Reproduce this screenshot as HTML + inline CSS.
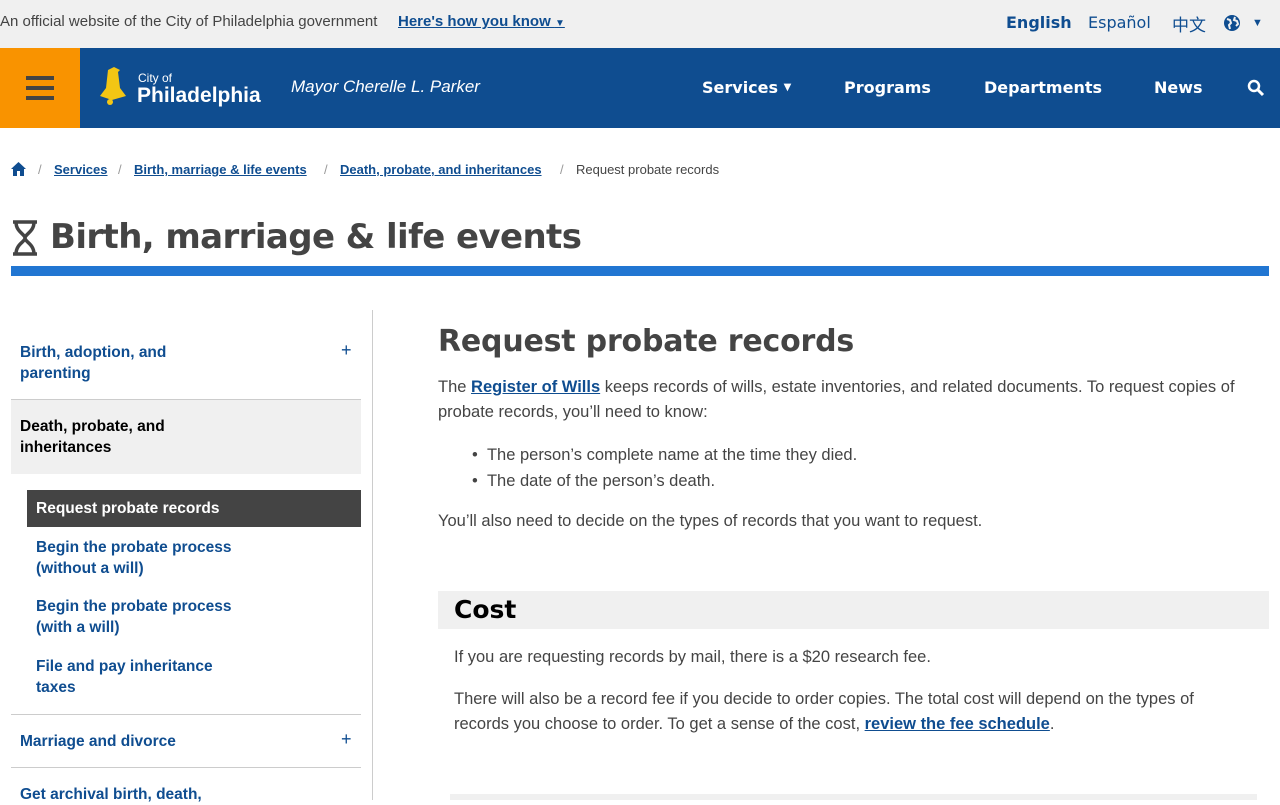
<!DOCTYPE html>
<html><head><meta charset="utf-8"><style>
*{margin:0;padding:0;box-sizing:border-box}
body{width:1280px;height:800px;overflow:hidden;background:#fff;font-family:"Liberation Sans","Noto Sans CJK SC",sans-serif;color:#444;position:relative}
.a{position:absolute;white-space:nowrap}
.top{position:absolute;left:0;top:0;width:1280px;height:48px;background:#f0f0f0}
.nav{position:absolute;left:0;top:48px;width:1280px;height:80px;background:#0f4d90}
.ham{position:absolute;left:0;top:48px;width:80px;height:80px;background:#f99300}
.ham i{position:absolute;left:26px;width:28px;height:4px;background:#444}
.navl{color:#fff;font-family:"DejaVu Sans",sans-serif;font-weight:bold;font-size:16px;top:78px}
a,.lk{color:#0f4d90}
.bc{font-size:13px;top:162px;font-weight:bold;text-decoration:underline;color:#0f4d90}
.sl{color:#999;font-size:13px;top:162px}
.side{font-size:15.5px;color:#0f4d90;line-height:21px;font-weight:bold}
.hr{position:absolute;height:1px;background:#ccc}
p.t{position:absolute;font-size:16.5px;line-height:25px;color:#444}
</style></head><body>
<div class="top"></div>
<div class="a" style="left:0;top:13px;font-size:15px;color:#444">An official website of the City of Philadelphia government</div>
<div class="a" style="left:398px;top:13px;font-size:15px;font-weight:bold;color:#0f4d90;text-decoration:underline">Here's how you know <span style="font-size:10px;text-decoration:none">▼</span></div>
<div class="a" style="left:1006px;top:13px;font-size:16px;font-weight:bold;color:#0f4d90;font-family:'DejaVu Sans',sans-serif">English</div>
<div class="a" style="left:1088px;top:13px;font-size:16px;color:#0f4d90;font-family:'DejaVu Sans',sans-serif">Español</div>
<div class="a" style="left:1172px;top:11px;font-size:17px;color:#0f4d90;font-family:'Noto Sans CJK SC',sans-serif">中文</div>
<svg class="a" style="left:1223px;top:14px" width="18" height="18" viewBox="0 0 18 18"><circle cx="9" cy="9" r="8" fill="#0f4d90"/><path d="M4 5l3 1 1 3-2 2 1 4M12 3l-1 3 3 1 1 3-2 2" stroke="#f0f0f0" stroke-width="2" fill="none"/></svg>
<div class="a" style="left:1252px;top:17px;font-size:11px;color:#0f4d90">▼</div>

<div class="nav"></div>
<div class="ham"><i style="top:28px"></i><i style="top:38px"></i><i style="top:48px"></i></div>
<svg class="a" style="left:98px;top:66px" width="36" height="42" viewBox="0 0 36 42"><path d="M10 4l6-3 6 3-2 2 2 16 6 8-14 4-12-4 6-8z" fill="#f3c614"/><circle cx="12" cy="36" r="3" fill="#f3c614"/></svg>
<div class="a" style="left:138px;top:71px;color:#fff;font-size:12px">City of</div>
<div class="a" style="left:137px;top:84px;color:#fff;font-size:21px;font-weight:bold">Philadelphia</div>
<div class="a" style="left:291px;top:77px;color:#fff;font-size:17px;font-style:italic">Mayor Cherelle L. Parker</div>
<div class="a navl" style="left:702px">Services <span style="font-size:10px;vertical-align:3px">▼</span></div>
<div class="a navl" style="left:844px">Programs</div>
<div class="a navl" style="left:984px">Departments</div>
<div class="a navl" style="left:1154px">News</div>
<svg class="a" style="left:1247px;top:79px" width="18" height="18" viewBox="0 0 18 18"><circle cx="7" cy="7" r="5" stroke="#fff" stroke-width="2.5" fill="none"/><path d="M11 11l5 5" stroke="#fff" stroke-width="3"/></svg>

<svg class="a" style="left:11px;top:162px" width="15" height="14" viewBox="0 0 15 14"><path d="M7.5 0L0 7h2v7h4V9h3v5h4V7h2z" fill="#0f4d90"/></svg>
<div class="a sl" style="left:38px">/</div>
<div class="a bc" style="left:54px">Services</div>
<div class="a sl" style="left:118px">/</div>
<div class="a bc" style="left:134px">Birth, marriage &amp; life events</div>
<div class="a sl" style="left:324px">/</div>
<div class="a bc" style="left:340px">Death, probate, and inheritances</div>
<div class="a sl" style="left:560px">/</div>
<div class="a" style="left:576px;top:162px;font-size:13px;color:#444">Request probate records</div>

<svg class="a" style="left:11px;top:220px" width="28" height="36" viewBox="0 0 28 36"><path d="M2 2h24M2 34h24M5 2c0 10 9 12 9 16s-9 6-9 16M23 2c0 10-9 12-9 16s9 6 9 16" stroke="#444" stroke-width="3.5" fill="none"/></svg>
<div class="a" style="left:50px;top:217px;font-size:34px;font-weight:bold;font-family:'DejaVu Sans',sans-serif;color:#444;letter-spacing:-0.6px">Birth, marriage &amp; life events</div>
<div class="a" style="left:11px;top:266px;width:1258px;height:10px;background:#2176d2"></div>

<div class="a" style="left:372px;top:310px;width:1px;height:490px;background:#ccc"></div>
<div class="a side" style="left:20px;top:342px">Birth, adoption, and<br>parenting</div>
<div class="a" style="left:341px;top:340px;font-size:18px;color:#0f4d90">+</div>
<div class="a" style="left:11px;top:399px;width:350px;height:75px;background:#f0f0f0;border-top:1px solid #ccc"></div>
<div class="a side" style="left:20px;top:416px;color:#000">Death, probate, and<br>inheritances</div>
<div class="a" style="left:27px;top:490px;width:334px;height:37px;background:#444"></div>
<div class="a side" style="left:36px;top:498px;color:#fff;font-weight:bold">Request probate records</div>
<div class="a side" style="left:36px;top:537px">Begin the probate process<br>(without a will)</div>
<div class="a side" style="left:36px;top:596px">Begin the probate process<br>(with a will)</div>
<div class="a side" style="left:36px;top:656px">File and pay inheritance<br>taxes</div>
<div class="hr" style="left:11px;top:714px;width:350px"></div>
<div class="a side" style="left:20px;top:731px">Marriage and divorce</div>
<div class="a" style="left:341px;top:729px;font-size:18px;color:#0f4d90">+</div>
<div class="hr" style="left:11px;top:767px;width:350px"></div>
<div class="a side" style="left:20px;top:784px">Get archival birth, death,</div>

<div class="a" style="left:438px;top:324px;font-size:30px;font-weight:bold;font-family:'DejaVu Sans',sans-serif;color:#444;letter-spacing:-0.2px">Request probate records</div>
<p class="t" style="left:438px;top:375px;width:830px">The <b class="lk" style="text-decoration:underline">Register of Wills</b> keeps records of wills, estate inventories, and related documents. To request copies of probate records, you’ll need to know:</p>
<div class="a" style="left:472px;top:442px;font-size:16.5px;line-height:26px">•&nbsp;&nbsp;The person’s complete name at the time they died.<br>•&nbsp;&nbsp;The date of the person’s death.</div>
<p class="t" style="left:438px;top:509px">You’ll also need to decide on the types of records that you want to request.</p>
<div class="a" style="left:438px;top:591px;width:831px;height:38px;background:#f0f0f0"></div>
<div class="a" style="left:454px;top:595px;font-size:25px;font-weight:bold;font-family:'DejaVu Sans',sans-serif;color:#000">Cost</div>
<p class="t" style="left:454px;top:645px">If you are requesting records by mail, there is a $20 research fee.</p>
<p class="t" style="left:454px;top:687px;width:770px">There will also be a record fee if you decide to order copies. The total cost will depend on the types of records you choose to order. To get a sense of the cost, <b class="lk" style="text-decoration:underline">review the fee schedule</b>.</p>
<div class="a" style="left:450px;top:794px;width:807px;height:6px;background:#f0f0f0"></div>
</body></html>
